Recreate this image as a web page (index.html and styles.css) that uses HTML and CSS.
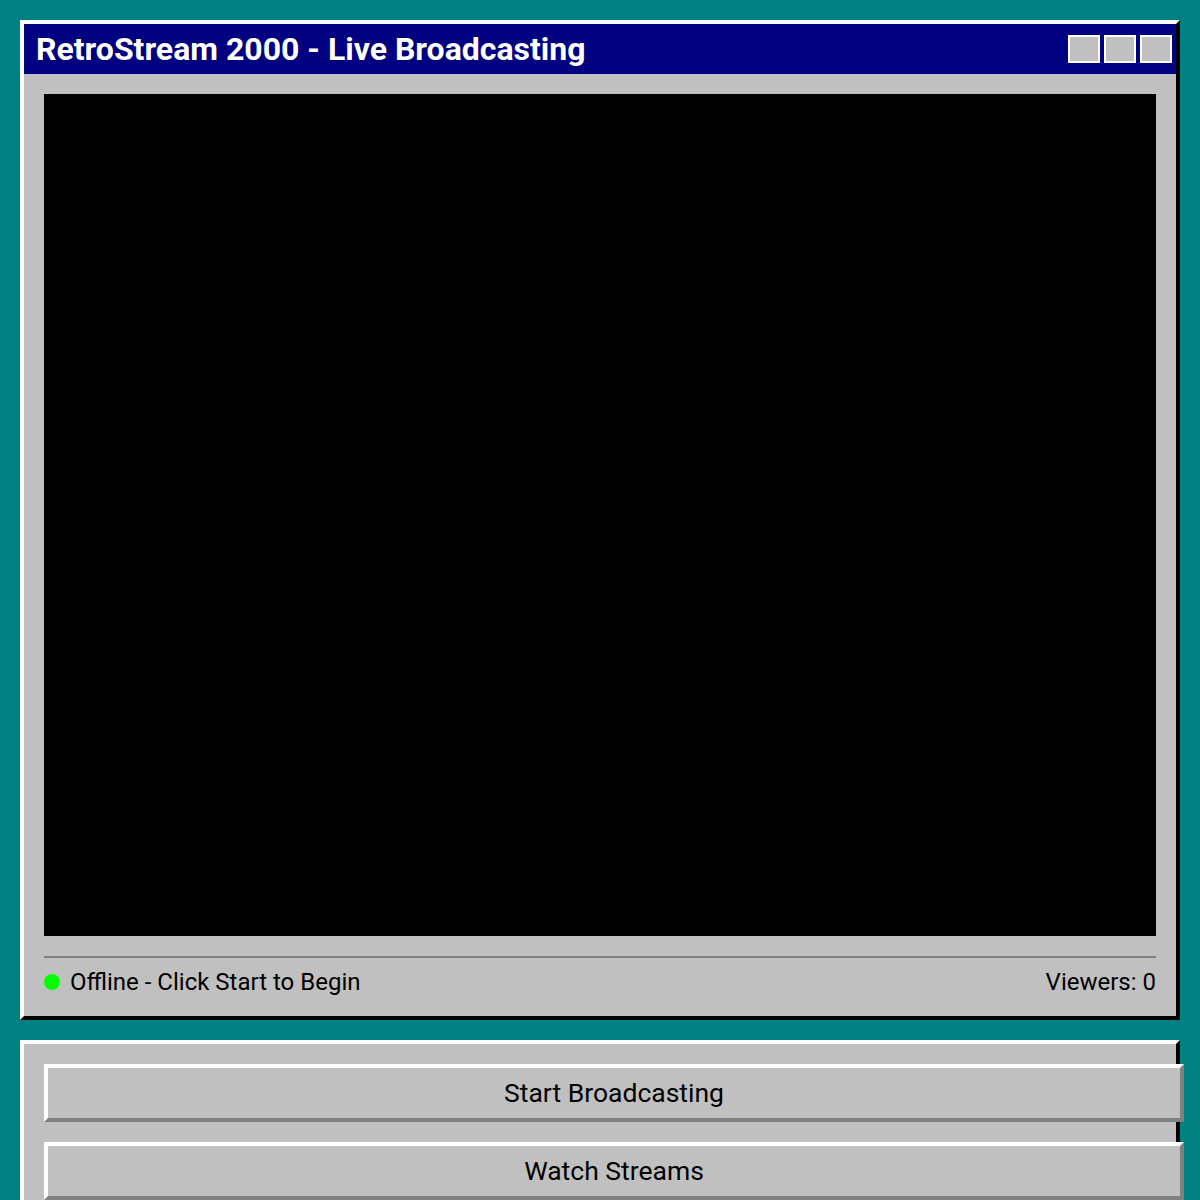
FILE: index.html
```html
<!DOCTYPE html>
<html lang="en">
<head>
    <meta charset="UTF-8">
    <meta name="viewport" content="width=device-width, initial-scale=1.0">
    <title>RetroStream 2000</title>
    <link rel="stylesheet" href="styles.css">
</head>
<body>
    <div class="window">
        <div class="title-bar">
            <span class="title-text">RetroStream 2000 - Live Broadcasting</span>
            <div class="title-buttons">
                <span class="title-button"></span>
                <span class="title-button"></span>
                <span class="title-button"></span>
            </div>
        </div>
        <div class="window-body">
            <div class="video-box" id="video"></div>
            <div class="status-bar">
                <div class="status-left">
                    <span class="status-dot"></span>
                    <span id="statusText">Offline - Click Start to Begin</span>
                </div>
                <span>Viewers: <span id="viewers">0</span></span>
            </div>
        </div>
    </div>

    <!-- Steuerung -->
    <div class="window controls">
        <button class="retro-button" id="startButton">Start Broadcasting</button>
        <button class="retro-button">Watch Streams</button>
    </div>
</body>
</html>
```

FILE: styles.css
```css
body {
    margin: 0;
    padding: 20px;
    background-color: #008080;
    font-family: Roboto, "Liberation Sans", sans-serif;
    color: #000000;
}
.window {
    background-color: #c0c0c0;
    border: 4px solid;
    border-color: #ffffff #000000 #000000 #ffffff;
}
.title-bar {
    display: flex;
    align-items: center;
    justify-content: space-between;
    height: 50px;
    padding: 0 4px 0 12px;
    background-color: #000080;
    color: #ffffff;
}
.title-text {
    font-size: 32px;
    font-weight: bold;
}
.title-buttons {
    display: flex;
    gap: 4px;
}
.title-button {
    width: 28px;
    height: 24px;
    background-color: #c0c0c0;
    border: 2px solid #ffffff;
}
.window-body {
    padding: 20px;
}
.video-box {
    height: 842px;
    background-color: #000000;
}
.status-bar {
    display: flex;
    justify-content: space-between;
    align-items: center;
    margin-top: 20px;
    padding-top: 10px;
    border-top: 2px solid #808080;
    font-size: 24px;
    line-height: 28px;
}
.status-left {
    display: flex;
    align-items: center;
}
.status-dot {
    width: 16px;
    height: 16px;
    margin-right: 10px;
    border-radius: 50%;
    background-color: #00ff00;
}
.controls {
    margin-top: 20px;
    padding: 20px;
}
.retro-button {
    display: block;
    box-sizing: content-box;
    width: 100%;
    margin-bottom: 20px;
    padding: 10px;
    font-family: Roboto, "Liberation Sans", sans-serif;
    font-size: 26.5px;
    line-height: 30px;
    color: #000000;
    background-color: #c0c0c0;
    border: 4px solid;
    border-color: #ffffff #808080 #808080 #ffffff;
}
```
